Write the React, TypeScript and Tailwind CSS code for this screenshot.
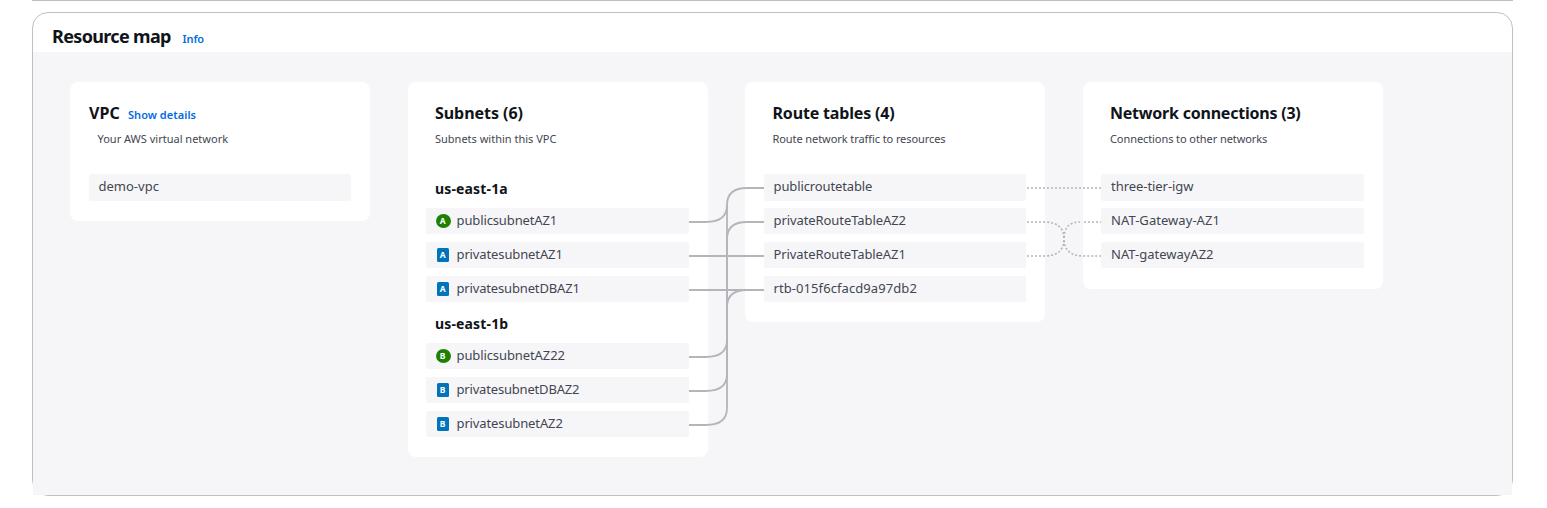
import React from "react";

type Subnet = { name: string; zone: string; kind: "public" | "private"; track: string };

function Badge({ zone, kind }: { zone: string; kind: "public" | "private" }) {
  return (
    <svg width="15" height="14" viewBox="0 0 15 14" className="shrink-0">
      {kind === "public" ? (
        <ellipse cx="7.5" cy="7" rx="7.5" ry="7" fill="#1d8102" />
      ) : (
        <rect x="1" y="0" width="12" height="14" rx="1.5" fill="#0073bb" />
      )}
      <text x="6.7" y="10" textAnchor="middle" fill="#fff" fontSize="8.5" fontWeight="700" fontFamily="Noto Sans, sans-serif">
        {zone}
      </text>
    </svg>
  );
}

function Card({ children, className = "" }: { children: React.ReactNode; className?: string }) {
  return <section className={`w-[300px] shrink-0 rounded-[8px] bg-white pt-[19px] pl-[18.5px] ${className}`}>{children}</section>;
}

function Head({ title, text, titleTrack, textTrack }: { title: string; text: string; titleTrack: string; textTrack: string }) {
  return (
    <div className="pl-[9px]">
      <h3 className={`text-[16px] leading-6 font-bold whitespace-nowrap ${titleTrack}`}>{title}</h3>
      <p className={`mt-[6px] text-[11px] leading-4 whitespace-nowrap text-[#424650] ${textTrack}`}>{text}</p>
    </div>
  );
}

function Row({ children, className = "h-[26px] pb-[2px]" }: { children: React.ReactNode; className?: string }) {
  return (
    <li className={`flex items-center rounded-[2px] bg-[#f6f6f9] pl-[10px] text-[13px] leading-5 whitespace-nowrap text-[#424650] ${className}`}>
      {children}
    </li>
  );
}

function SubnetGroup({ zone, subnets, className }: { zone: string; subnets: Subnet[]; className: string }) {
  return (
    <div className={className}>
      <h4 className="mb-[9px] pl-[9px] text-[14px] leading-5 font-bold tracking-[0.15px]">{zone}</h4>
      <ul className="flex flex-col gap-2">
        {subnets.map((s) => (
          <li key={s.name} className="flex h-[26px] items-center gap-[6px] rounded-[2px] bg-[#f6f6f9] pl-[9.5px] text-[13px] leading-5 whitespace-nowrap text-[#424650]">
            <Badge zone={s.zone} kind={s.kind} />
            <span className={`pb-[2px] ${s.track}`}>{s.name}</span>
          </li>
        ))}
      </ul>
    </div>
  );
}

const zoneA: Subnet[] = [
  { name: "publicsubnetAZ1", zone: "A", kind: "public", track: "tracking-[-0.12px]" },
  { name: "privatesubnetAZ1", zone: "A", kind: "private", track: "tracking-[-0.12px]" },
  { name: "privatesubnetDBAZ1", zone: "A", kind: "private", track: "tracking-[-0.16px]" },
];

const zoneB: Subnet[] = [
  { name: "publicsubnetAZ22", zone: "B", kind: "public", track: "tracking-[-0.1px]" },
  { name: "privatesubnetDBAZ2", zone: "B", kind: "private", track: "tracking-[-0.18px]" },
  { name: "privatesubnetAZ2", zone: "B", kind: "private", track: "tracking-[-0.12px]" },
];

function Connectors() {
  return (
    <svg className="pointer-events-none absolute top-0 left-0" width="1479" height="443" viewBox="33 52 1479 443" fill="none">
      <g stroke="#b4b4bb" strokeWidth="1.8">
        <path d="M689 222H706Q727 222 727 205Q727 188 747 188H764" />
        <path d="M689 256H764" />
        <path d="M689 290H764" />
        <path d="M689 357H706Q727 357 727 340V205" />
        <path d="M689 391H706Q727 391 727 374V307Q727 290 747 290" />
        <path d="M689 425H706Q727 425 727 408V239Q727 222 747 222H764" />
      </g>
      <g stroke="#b4b4bb" strokeWidth="1.6" strokeDasharray="2 2">
        <path d="M1027 188H1101" />
        <path d="M1027 222H1044Q1064 222 1064 239Q1064 256 1084 256H1101" />
        <path d="M1027 256H1044Q1064 256 1064 239Q1064 222 1080 222" />
        <path d="M1084 222H1101" />
      </g>
    </svg>
  );
}

export default function App() {
  return (
    <div className="h-[508px] w-[1547px] overflow-hidden bg-white pl-8 font-['Noto_Sans',sans-serif] text-[#0f141a]">
      <div className="h-px w-[1481px] bg-[#c0c0c2]" />
      <main className="mt-[11px] h-[484px] w-[1481px] rounded-[16px] border border-[#c0c0c2]">
        <header className="flex h-[39px] items-baseline pt-[11px] pl-[19px]">
          <h2 className="w-[130.5px] text-[18px] leading-6 font-bold tracking-[-0.65px] whitespace-nowrap">Resource map</h2>
          <a className="text-[11px] font-semibold tracking-[-0.1px] text-[#006ce0]">Info</a>
        </header>
        <div className="relative flex h-[443px] items-start gap-[37.5px] bg-[#f6f6f9] pt-[30px] pl-[37px]">
          <Card className="h-[139px] pr-[19px]">
            <div className="flex items-baseline pl-[0.5px]">
              <h3 className="w-[39px] text-[16px] leading-6 font-bold tracking-[0.1px]">VPC</h3>
              <a className="text-[11px] font-semibold tracking-[0.05px] text-[#006ce0]">Show details</a>
            </div>
            <p className="mt-[6px] pl-[9px] text-[11px] leading-4 text-[#424650]">Your AWS virtual network</p>
            <ul className="mt-[27px]">
              <Row className="h-[27px] pb-[3px]">demo-vpc</Row>
            </ul>
          </Card>
          <Card className="h-[375px] pr-[18.5px]">
            <Head title="Subnets (6)" text="Subnets within this VPC" titleTrack="tracking-[-0.05px]" textTrack="tracking-[0px]" />
            <SubnetGroup zone="us-east-1a" subnets={zoneA} className="mt-[32px]" />
            <SubnetGroup zone="us-east-1b" subnets={zoneB} className="mt-[12px]" />
          </Card>
          <Card className="h-[240px] pr-[19px]">
            <Head title="Route tables (4)" text="Route network traffic to resources" titleTrack="tracking-[-0.17px]" textTrack="tracking-[-0.08px]" />
            <ul className="mt-[27px] flex flex-col gap-2">
              <Row className="-mb-px h-[27px] pb-[3px] tracking-[-0.12px]">publicroutetable</Row>
              <Row className="h-[26px] pb-[2px] tracking-[-0.08px]">privateRouteTableAZ2</Row>
              <Row className="h-[26px] pb-[2px] tracking-[-0.08px]">PrivateRouteTableAZ1</Row>
              <Row className="h-[26px] pb-[2px] tracking-[0.08px]">rtb-015f6cfacd9a97db2</Row>
            </ul>
          </Card>
          <Card className="h-[207px] pr-[18.5px]">
            <Head title="Network connections (3)" text="Connections to other networks" titleTrack="tracking-[-0.22px]" textTrack="tracking-[-0.08px]" />
            <ul className="mt-[27px] flex flex-col gap-2">
              <Row className="-mb-px h-[27px] pb-[3px] tracking-[-0.05px]">three-tier-igw</Row>
              <Row className="h-[26px] pb-[2px] tracking-[0.05px]">NAT-Gateway-AZ1</Row>
              <Row>NAT-gatewayAZ2</Row>
            </ul>
          </Card>
          <Connectors />
        </div>
      </main>
    </div>
  );
}
